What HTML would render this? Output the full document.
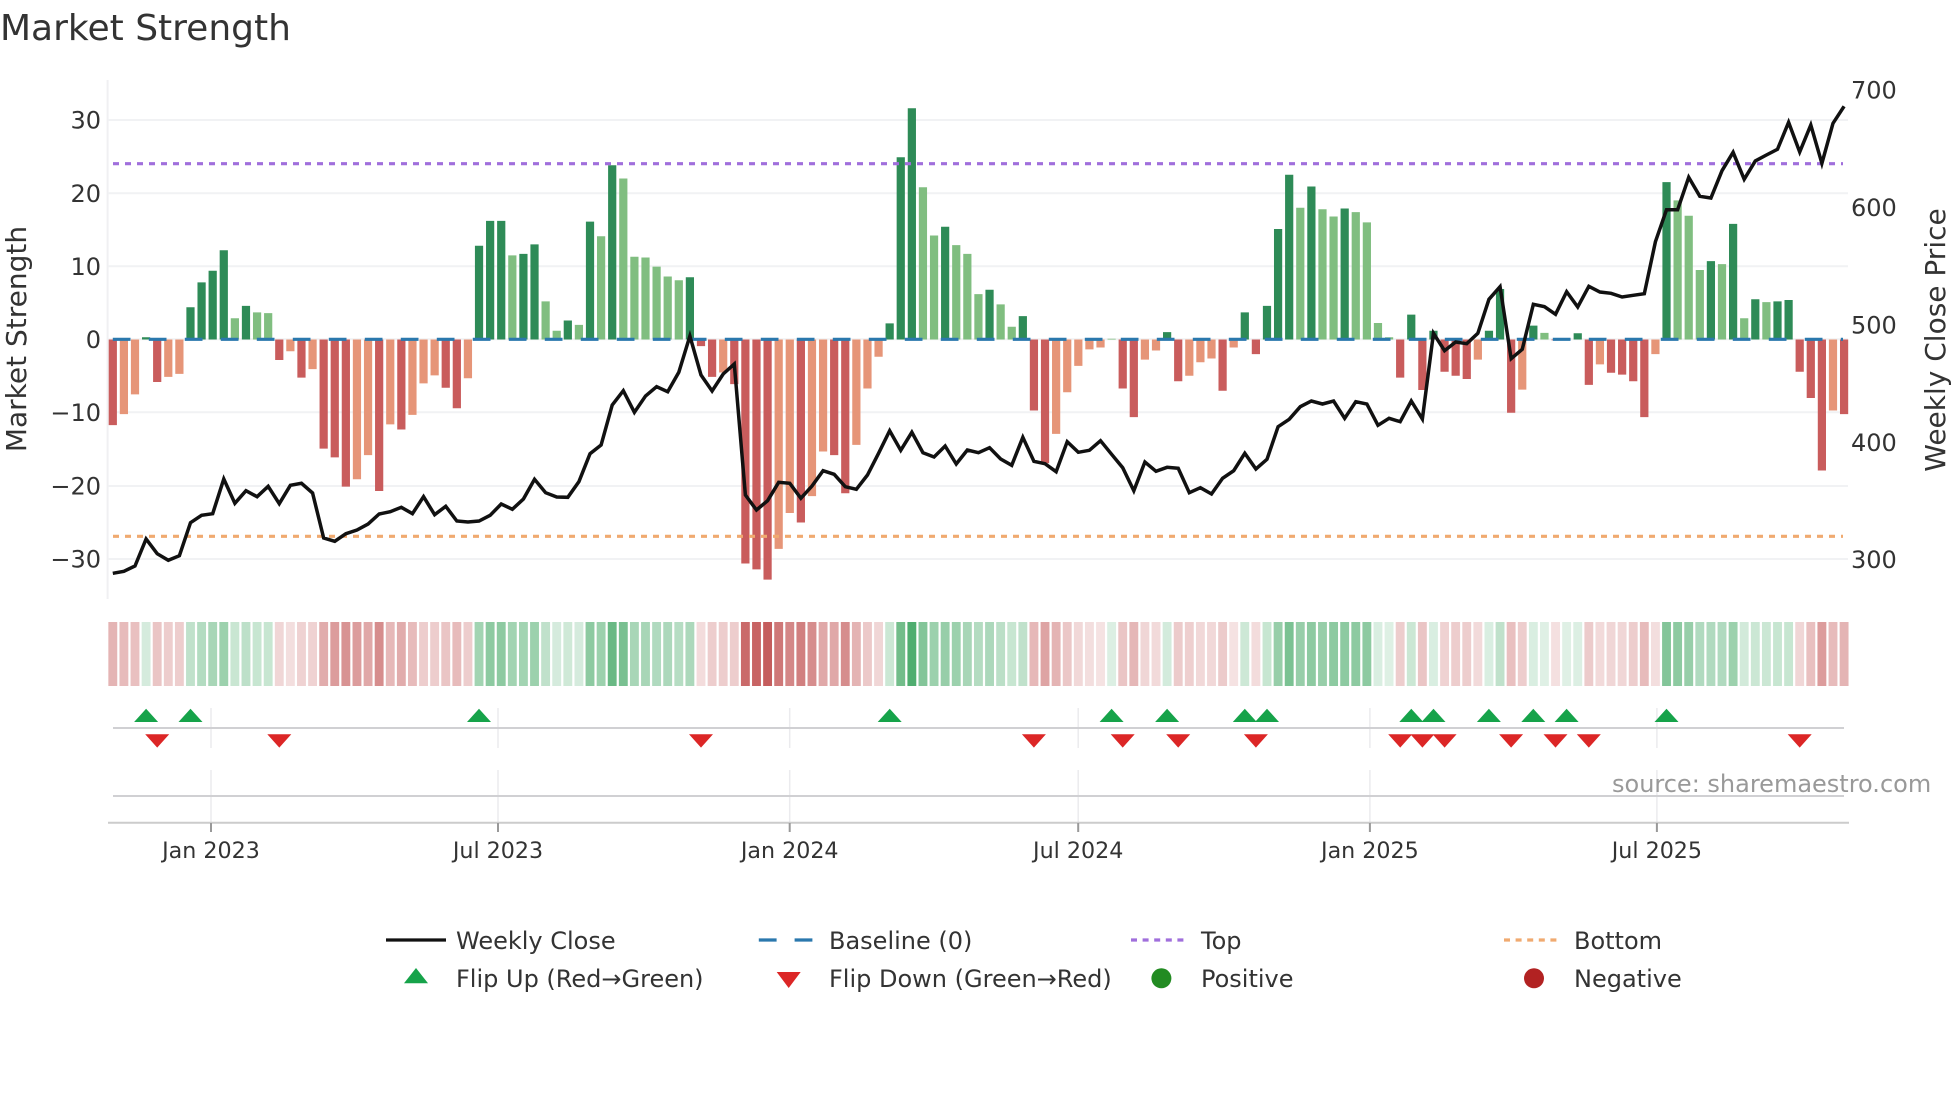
<!DOCTYPE html>
<html lang="en"><head><meta charset="utf-8"><title>Market Strength</title>
<style>html,body{margin:0;padding:0;background:#fff}svg{display:block}text{font-family:"DejaVu Sans",sans-serif;fill:#333}</style></head>
<body>
<svg width="1960" height="1102" viewBox="0 0 1960 1102" xmlns="http://www.w3.org/2000/svg">
<rect width="1960" height="1102" fill="#fff"/>
<text x="0" y="40" font-size="36">Market Strength</text>

<path d="M107.6 80V599" stroke="#f0f0f2" stroke-width="2" fill="none"/>
<path d="M108 120H1848M108 193.3H1848M108 266.3H1848M108 339.3H1848M108 412.3H1848M108 486H1848M108 559H1848" stroke="#f1f2f4" stroke-width="2" fill="none"/>

<g transform="translate(112.8,339.5) scale(11.098,-7.32)" fill="none" stroke-width=".74">
<path stroke="#c95c5c" d="M0 0V-11.7M4 0V-5.8M15 0V-2.8M17 0V-5.2M19 0V-14.9M20 0V-16.1M21 0V-20.1M24 0V-20.7M26 0V-12.3M30 0V-6.6M31 0V-9.4M53 0V-.9M54 0V-5.1M56 0V-6.1M57 0V-30.6M58 0V-31.4M59 0V-32.8M62 0V-25M65 0V-15.8M66 0V-21M83 0V-9.7M84 0V-16.9M91 0V-6.7M92 0V-10.6M96 0V-5.7M100 0V-7M103 0V-2M116 0V-5.2M118 0V-6.9M120 0V-4.4M121 0V-4.95M122 0V-5.4M126 0V-10M130 0V-.1M133 0V-6.2M135 0V-4.55M136 0V-4.8M137 0V-5.7M138 0V-10.6M152 0V-4.4M153 0V-8M154 0V-17.9M156 0V-10.2"/>
<path stroke="#e69578" d="M1 0V-10.2M2 0V-7.5M5 0V-5.1M6 0V-4.7M16 0V-1.6M18 0V-4.05M22 0V-19.1M23 0V-15.8M25 0V-11.6M27 0V-10.3M28 0V-6M29 0V-4.9M32 0V-5.3M55 0V-4.5M60 0V-28.6M61 0V-23.7M63 0V-21.4M64 0V-15.3M67 0V-14.4M68 0V-6.7M69 0V-2.35M85 0V-12.9M86 0V-7.2M87 0V-3.6M88 0V-1.35M89 0V-1.1M93 0V-2.75M94 0V-1.5M97 0V-4.95M98 0V-3.1M99 0V-2.6M101 0V-1.1M123 0V-2.75M127 0V-6.85M134 0V-3.4M139 0V-2M155 0V-9.7"/>
<path stroke="#2e8b57" d="M3 0V.3M7 0V4.4M8 0V7.8M9 0V9.4M10 0V12.2M12 0V4.6M33 0V12.8M34 0V16.2M35 0V16.2M37 0V11.7M38 0V13M41 0V2.6M43 0V16.1M45 0V23.8M52 0V8.5M70 0V2.2M71 0V24.9M72 0V31.6M75 0V15.4M79 0V6.8M82 0V3.2M95 0V1M102 0V3.7M104 0V4.6M105 0V15.1M106 0V22.5M108 0V20.9M111 0V17.9M117 0V3.4M119 0V1.2M124 0V1.2M125 0V6.9M128 0V1.9M132 0V.85M140 0V21.5M144 0V10.7M146 0V15.8M148 0V5.5M150 0V5.2M151 0V5.4"/>
<path stroke="#80be80" d="M11 0V2.9M13 0V3.7M14 0V3.6M36 0V11.5M39 0V5.2M40 0V1.2M42 0V2M44 0V14.1M46 0V22M47 0V11.3M48 0V11.2M49 0V9.95M50 0V8.6M51 0V8.1M73 0V20.8M74 0V14.2M76 0V12.9M77 0V11.7M78 0V6.2M80 0V4.8M81 0V1.75M90 0V.1M107 0V18M109 0V17.8M110 0V16.8M112 0V17.4M113 0V16M114 0V2.25M115 0V.3M129 0V.9M131 0V.1M141 0V19M142 0V16.9M143 0V9.5M145 0V10.3M147 0V2.9M149 0V5.1"/>
</g>

<path d="M113 163.7H1843" stroke="#a06fdc" stroke-width="3.2" stroke-dasharray="6 6" fill="none"/>
<path d="M113 536.3H1843" stroke="#f0aa70" stroke-width="3.2" stroke-dasharray="6 6" fill="none"/>
<path d="M112.8 339.3H1843" stroke="#2a78ad" stroke-width="3.2" stroke-dasharray="17.7 18.3" fill="none"/>

<polyline transform="translate(112.8,0) scale(11.098,1)" fill="none" stroke="#111" stroke-width="3.5" vector-effect="non-scaling-stroke" points="0,573.3 1,571.3 2,566 3,539 4,553.7 5,560.3 6,555.7 7,522.7 8,515.3 9,513.7 10,479 11,503.3 12,490.7 13,496.7 14,486.3 15,503.7 16,485.3 17,483.3 18,493 19,538 20,541.3 21,533.7 22,530 23,524 24,514 25,511.7 26,507.3 27,513.7 28,496.7 29,514.7 30,506.3 31,521 32,522 33,521 34,515.3 35,504 36,509.3 37,499 38,479.3 39,492.7 40,497 41,497.3 42,481.7 43,453.7 44,445 45,405 46,390.7 47,412.3 48,396 49,386.7 50,391.7 51,372.3 52,336 53,375 54,391 55,374 56,364 57,495 58,510 59,500.7 60,482.3 61,483.3 62,498.3 63,486 64,470.7 65,474.3 66,486.7 67,489.3 68,475 69,453.3 70,430.7 71,450.3 72,432.3 73,452.7 74,457 75,446 76,464 77,450 78,452.7 79,447.7 80,459 81,465.3 82,437.3 83,461.3 84,463.7 85,471.7 86,441.7 87,452.3 88,450.3 89,440.7 90,454.3 91,467.7 92,490.7 93,462 94,471.3 95,467.3 96,468.3 97,492.7 98,487.7 99,494 100,478.3 101,470.7 102,453.3 103,469 104,459.3 105,426.7 106,419.3 107,406.7 108,401 109,404 110,401 111,418.3 112,401.7 113,404 114,425.3 115,418.3 116,421.7 117,401 118,419 119,333.3 120,350.7 121,342 122,343.7 123,333.3 124,299.3 125,286.7 126,358.7 127,349.3 128,304.3 129,306.7 130,314.3 131,291.7 132,307 133,286.3 134,292 135,293.3 136,297 137,295.3 138,293.7 139,241.7 140,209.7 141,209.7 142,177.3 143,196.3 144,198 145,170.7 146,152.3 147,179.3 148,161 149,155 150,149.3 151,122.3 152,152 153,125 154,163.3 155,123.3 156,106.3"/>

<g font-size="24" text-anchor="end">
<text x="101" y="128.5">30</text><text x="101" y="201.8">20</text><text x="101" y="274.8">10</text><text x="101" y="348">0</text><text x="101" y="421">−10</text><text x="101" y="494.5">−20</text><text x="101" y="567.5">−30</text>
</g>
<g font-size="24">
<text x="1851" y="98.5">700</text><text x="1851" y="215.8">600</text><text x="1851" y="333.5">500</text><text x="1851" y="450.8">400</text><text x="1851" y="567.8">300</text>
</g>
<text transform="translate(26,339) rotate(-90)" text-anchor="middle" font-size="28">Market Strength</text>
<text transform="translate(1945,340) rotate(-90)" text-anchor="middle" font-size="28">Weekly Close Price</text>

<g transform="translate(112.8,622) scale(11.098,64)" fill="none" stroke-width=".8" stroke="#b53030">
<path d="M0 0V1" stroke-opacity=".36"/><path d="M1 0V1" stroke-opacity=".33"/><path d="M2 0V1" stroke-opacity=".3"/><path d="M4 0V1" stroke-opacity=".28"/><path d="M5 0V1" stroke-opacity=".24"/><path d="M6 0V1" stroke-opacity=".24"/><path d="M15 0V1" stroke-opacity=".2"/><path d="M16 0V1" stroke-opacity=".16"/><path d="M17 0V1" stroke-opacity=".22"/><path d="M18 0V1" stroke-opacity=".22"/><path d="M19 0V1" stroke-opacity=".4"/><path d="M20 0V1" stroke-opacity=".48"/><path d="M21 0V1" stroke-opacity=".52"/><path d="M22 0V1" stroke-opacity=".48"/><path d="M23 0V1" stroke-opacity=".42"/><path d="M24 0V1" stroke-opacity=".55"/><path d="M25 0V1" stroke-opacity=".34"/><path d="M26 0V1" stroke-opacity=".4"/><path d="M27 0V1" stroke-opacity=".33"/><path d="M28 0V1" stroke-opacity=".24"/><path d="M29 0V1" stroke-opacity=".24"/><path d="M30 0V1" stroke-opacity=".28"/><path d="M31 0V1" stroke-opacity=".33"/><path d="M32 0V1" stroke-opacity=".24"/>
<path d="M53 0V1" stroke-opacity=".17"/><path d="M54 0V1" stroke-opacity=".24"/><path d="M55 0V1" stroke-opacity=".24"/><path d="M56 0V1" stroke-opacity=".24"/><path d="M57 0V1" stroke-opacity=".72"/><path d="M58 0V1" stroke-opacity=".75"/><path d="M59 0V1" stroke-opacity=".78"/><path d="M60 0V1" stroke-opacity=".65"/><path d="M61 0V1" stroke-opacity=".58"/><path d="M62 0V1" stroke-opacity=".62"/><path d="M63 0V1" stroke-opacity=".55"/><path d="M64 0V1" stroke-opacity=".42"/><path d="M65 0V1" stroke-opacity=".42"/><path d="M66 0V1" stroke-opacity=".55"/><path d="M67 0V1" stroke-opacity=".36"/><path d="M68 0V1" stroke-opacity=".26"/><path d="M69 0V1" stroke-opacity=".2"/>
<path d="M83 0V1" stroke-opacity=".34"/><path d="M84 0V1" stroke-opacity=".44"/><path d="M85 0V1" stroke-opacity=".36"/><path d="M86 0V1" stroke-opacity=".27"/><path d="M87 0V1" stroke-opacity=".19"/><path d="M88 0V1" stroke-opacity=".16"/><path d="M89 0V1" stroke-opacity=".14"/><path d="M91 0V1" stroke-opacity=".28"/><path d="M92 0V1" stroke-opacity=".35"/><path d="M93 0V1" stroke-opacity=".2"/><path d="M94 0V1" stroke-opacity=".18"/><path d="M96 0V1" stroke-opacity=".25"/><path d="M97 0V1" stroke-opacity=".23"/><path d="M98 0V1" stroke-opacity=".19"/><path d="M99 0V1" stroke-opacity=".19"/><path d="M100 0V1" stroke-opacity=".25"/><path d="M101 0V1" stroke-opacity=".14"/><path d="M103 0V1" stroke-opacity=".17"/>
<path d="M116 0V1" stroke-opacity=".24"/><path d="M118 0V1" stroke-opacity=".28"/><path d="M120 0V1" stroke-opacity=".22"/><path d="M121 0V1" stroke-opacity=".24"/><path d="M122 0V1" stroke-opacity=".24"/><path d="M123 0V1" stroke-opacity=".18"/><path d="M126 0V1" stroke-opacity=".3"/><path d="M127 0V1" stroke-opacity=".24"/><path d="M130 0V1" stroke-opacity=".15"/><path d="M133 0V1" stroke-opacity=".25"/><path d="M134 0V1" stroke-opacity=".18"/><path d="M135 0V1" stroke-opacity=".2"/><path d="M136 0V1" stroke-opacity=".2"/><path d="M137 0V1" stroke-opacity=".24"/><path d="M138 0V1" stroke-opacity=".33"/><path d="M139 0V1" stroke-opacity=".16"/><path d="M152 0V1" stroke-opacity=".2"/><path d="M153 0V1" stroke-opacity=".3"/><path d="M154 0V1" stroke-opacity=".48"/><path d="M155 0V1" stroke-opacity=".33"/><path d="M156 0V1" stroke-opacity=".36"/>
</g>
<g transform="translate(112.8,622) scale(11.098,64)" fill="none" stroke-width=".8" stroke="#1e9646" opacity=".92">
<path d="M3 0V1" stroke-opacity=".2"/><path d="M7 0V1" stroke-opacity=".3"/><path d="M8 0V1" stroke-opacity=".37"/><path d="M9 0V1" stroke-opacity=".42"/><path d="M10 0V1" stroke-opacity=".48"/><path d="M11 0V1" stroke-opacity=".26"/><path d="M12 0V1" stroke-opacity=".32"/><path d="M13 0V1" stroke-opacity=".27"/><path d="M14 0V1" stroke-opacity=".27"/>
<path d="M33 0V1" stroke-opacity=".45"/><path d="M34 0V1" stroke-opacity=".55"/><path d="M35 0V1" stroke-opacity=".55"/><path d="M36 0V1" stroke-opacity=".45"/><path d="M37 0V1" stroke-opacity=".45"/><path d="M38 0V1" stroke-opacity=".48"/><path d="M39 0V1" stroke-opacity=".3"/><path d="M40 0V1" stroke-opacity=".2"/><path d="M41 0V1" stroke-opacity=".23"/><path d="M42 0V1" stroke-opacity=".2"/><path d="M43 0V1" stroke-opacity=".55"/><path d="M44 0V1" stroke-opacity=".48"/><path d="M45 0V1" stroke-opacity=".72"/><path d="M46 0V1" stroke-opacity=".65"/><path d="M47 0V1" stroke-opacity=".42"/><path d="M48 0V1" stroke-opacity=".42"/><path d="M49 0V1" stroke-opacity=".38"/><path d="M50 0V1" stroke-opacity=".4"/><path d="M51 0V1" stroke-opacity=".35"/><path d="M52 0V1" stroke-opacity=".4"/>
<path d="M70 0V1" stroke-opacity=".25"/><path d="M71 0V1" stroke-opacity=".68"/><path d="M72 0V1" stroke-opacity=".85"/><path d="M73 0V1" stroke-opacity=".6"/><path d="M74 0V1" stroke-opacity=".48"/><path d="M75 0V1" stroke-opacity=".5"/><path d="M76 0V1" stroke-opacity=".48"/><path d="M77 0V1" stroke-opacity=".42"/><path d="M78 0V1" stroke-opacity=".36"/><path d="M79 0V1" stroke-opacity=".4"/><path d="M80 0V1" stroke-opacity=".33"/><path d="M81 0V1" stroke-opacity=".27"/><path d="M82 0V1" stroke-opacity=".3"/>
<path d="M90 0V1" stroke-opacity=".17"/><path d="M95 0V1" stroke-opacity=".21"/><path d="M102 0V1" stroke-opacity=".24"/><path d="M104 0V1" stroke-opacity=".27"/><path d="M105 0V1" stroke-opacity=".5"/><path d="M106 0V1" stroke-opacity=".64"/><path d="M107 0V1" stroke-opacity=".5"/><path d="M108 0V1" stroke-opacity=".55"/><path d="M109 0V1" stroke-opacity=".5"/><path d="M110 0V1" stroke-opacity=".55"/><path d="M111 0V1" stroke-opacity=".55"/><path d="M112 0V1" stroke-opacity=".55"/><path d="M113 0V1" stroke-opacity=".55"/><path d="M114 0V1" stroke-opacity=".18"/><path d="M115 0V1" stroke-opacity=".16"/><path d="M117 0V1" stroke-opacity=".25"/><path d="M119 0V1" stroke-opacity=".18"/><path d="M124 0V1" stroke-opacity=".18"/><path d="M125 0V1" stroke-opacity=".3"/><path d="M128 0V1" stroke-opacity=".18"/><path d="M129 0V1" stroke-opacity=".15"/><path d="M131 0V1" stroke-opacity=".15"/><path d="M132 0V1" stroke-opacity=".17"/>
<path d="M140 0V1" stroke-opacity=".6"/><path d="M141 0V1" stroke-opacity=".55"/><path d="M142 0V1" stroke-opacity=".5"/><path d="M143 0V1" stroke-opacity=".38"/><path d="M144 0V1" stroke-opacity=".38"/><path d="M145 0V1" stroke-opacity=".38"/><path d="M146 0V1" stroke-opacity=".48"/><path d="M147 0V1" stroke-opacity=".22"/><path d="M148 0V1" stroke-opacity=".25"/><path d="M149 0V1" stroke-opacity=".25"/><path d="M150 0V1" stroke-opacity=".27"/><path d="M151 0V1" stroke-opacity=".27"/>
</g>

<path d="M211 708V748M498 708V748M789.7 708V748M1078.2 708V748M1369.9 708V748M1656.9 708V748M211 770V823M498 770V823M789.7 770V823M1078.2 770V823M1369.9 770V823M1656.9 770V823" stroke="#ebebee" stroke-width="1.5" fill="none"/>
<path d="M113 728H1844M113 796H1844" stroke="#d0d0d3" stroke-width="2" fill="none"/>
<path d="M108 822.7H1849" stroke="#cccccc" stroke-width="2" fill="none"/>
<path d="M211 823V832M498 823V832M789.7 823V832M1078.2 823V832M1369.9 823V832M1656.9 823V832" stroke="#999" stroke-width="2" fill="none"/>

<path fill="#16a34a" d="M134.1 722l12-13.3 12 13.3zM178.5 722l12-13.3 12 13.3zM467 722l12-13.3 12 13.3zM877.7 722l12-13.3 12 13.3zM1099.6 722l12-13.3 12 13.3zM1155.1 722l12-13.3 12 13.3zM1232.8 722l12-13.3 12 13.3zM1255 722l12-13.3 12 13.3zM1399.3 722l12-13.3 12 13.3zM1421.5 722l12-13.3 12 13.3zM1476.9 722l12-13.3 12 13.3zM1521.3 722l12-13.3 12 13.3zM1554.6 722l12-13.3 12 13.3zM1654.5 722l12-13.3 12 13.3z"/>
<path fill="#dc2626" d="M145.2 734.3h24l-12 13.3zM267.3 734.3h24l-12 13.3zM689 734.3h24l-12 13.3zM1021.9 734.3h24l-12 13.3zM1110.7 734.3h24l-12 13.3zM1166.2 734.3h24l-12 13.3zM1243.9 734.3h24l-12 13.3zM1388.2 734.3h24l-12 13.3zM1410.4 734.3h24l-12 13.3zM1432.6 734.3h24l-12 13.3zM1499.1 734.3h24l-12 13.3zM1543.5 734.3h24l-12 13.3zM1576.8 734.3h24l-12 13.3zM1787.7 734.3h24l-12 13.3z"/>

<g font-size="22.2" text-anchor="middle">
<text x="211" y="858">Jan 2023</text><text x="498" y="858">Jul 2023</text><text x="789.7" y="858">Jan 2024</text><text x="1078.2" y="858">Jul 2024</text><text x="1369.9" y="858">Jan 2025</text><text x="1656.9" y="858">Jul 2025</text>
</g>
<text x="1612" y="792" font-size="24" style="fill:#999">source: sharemaestro.com</text>

<path d="M386 940H446" stroke="#111" stroke-width="3.2" fill="none"/>
<path d="M758.8 940H813" stroke="#2a78ad" stroke-width="3.2" stroke-dasharray="17.8 18" fill="none"/>
<path d="M1131 940H1187" stroke="#a06fdc" stroke-width="3.2" stroke-dasharray="6 5.6" fill="none"/>
<path d="M1504 940H1560" stroke="#f0aa70" stroke-width="3.2" stroke-dasharray="6 5.6" fill="none"/>
<path fill="#16a34a" d="M404 983.3l12-15.3 12 15.3z"/>
<path fill="#dc2626" d="M776.7 972h24l-12 16z"/>
<circle cx="1161.4" cy="978.3" r="10" fill="#228b22"/>
<circle cx="1534" cy="978.3" r="10" fill="#b22222"/>
<g font-size="24">
<text x="456" y="949">Weekly Close</text>
<text x="829" y="949">Baseline (0)</text>
<text x="1201" y="949">Top</text>
<text x="1574" y="949">Bottom</text>
<text x="456" y="987">Flip Up (Red→Green)</text>
<text x="829" y="987">Flip Down (Green→Red)</text>
<text x="1201" y="987">Positive</text>
<text x="1574" y="987">Negative</text>
</g>
</svg>
</body></html>
